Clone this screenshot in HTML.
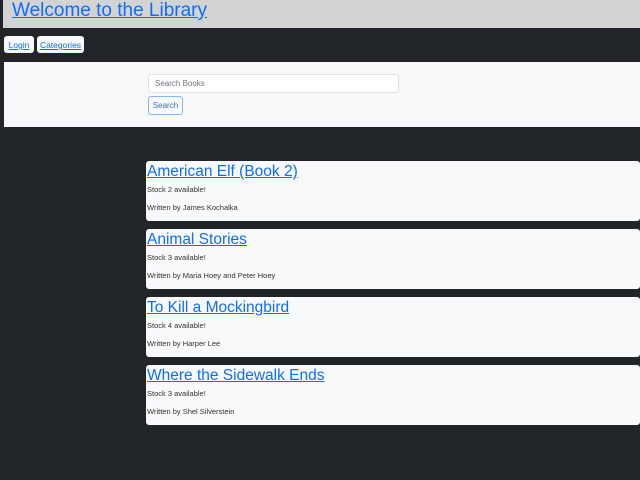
<!DOCTYPE html>
<html><head><style>
body{margin:0;background:#212529;width:640px;height:480px;overflow:hidden;font-family:"Liberation Sans",sans-serif;position:relative}
.a{position:absolute}
a{color:#0d6efd}
.hdr{left:3px;top:0;width:637px;height:28px;background:#d3d3d3}
.hdr a{position:absolute;left:9px;top:0px;font-size:19px;white-space:nowrap}
.btn{top:36px;height:17px;background:#f8f9fa;border-radius:3px;font-size:8.5px;line-height:18px;text-align:center}
.panel{left:4px;top:62px;width:636px;height:65px;background:#f8f9fa}
.inp{left:148px;top:74px;width:249px;height:17px;background:#fff;border:1px solid #dee2e6;border-radius:3px;font-size:8px;line-height:18px;color:#6c757d;text-indent:6px}
.sb{left:148px;top:96px;width:33px;height:17px;border:1px solid #86b7fe;border-radius:3px;font-size:8px;line-height:18px;color:#3d6fb0;text-align:center;background:#f8f9fa}
.card{left:146px;width:494px;height:60px;background:#f8f9fa;border-radius:3px}
.card a{position:absolute;left:1px;top:2px;font-size:15.5px;white-space:nowrap}
.card .s{position:absolute;left:1px;top:24px;font-size:7.5px;color:#333}
.card .w{position:absolute;left:1px;top:42px;font-size:7.5px;color:#333}
</style></head><body>
<div class="a hdr"><a href="#">Welcome to the Library</a></div>
<div class="a btn" style="left:4px;width:30px"><a href="#">Login</a></div>
<div class="a btn" style="left:37px;width:47px"><a href="#">Categories</a></div>
<div class="a panel"></div>
<div class="a inp">Search Books</div>
<div class="a sb">Search</div>
<div class="a card" style="top:161px"><a href="#">American Elf (Book 2)</a><div class="s">Stock 2 available!</div><div class="w">Written by James Kochalka</div></div>
<div class="a card" style="top:229px"><a href="#">Animal Stories</a><div class="s">Stock 3 available!</div><div class="w">Written by Maria Hoey and Peter Hoey</div></div>
<div class="a card" style="top:297px"><a href="#">To Kill a Mockingbird</a><div class="s">Stock 4 available!</div><div class="w">Written by Harper Lee</div></div>
<div class="a card" style="top:365px"><a href="#">Where the Sidewalk Ends</a><div class="s">Stock 3 available!</div><div class="w">Written by Shel Silverstein</div></div>
</body></html>
